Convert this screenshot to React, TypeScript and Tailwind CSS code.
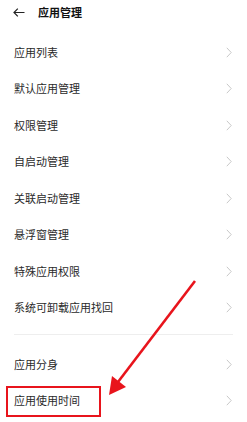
const groupOne = [
  '应用列表',
  '默认应用管理',
  '权限管理',
  '自启动管理',
  '关联启动管理',
  '悬浮窗管理',
  '特殊应用权限',
  '系统可卸载应用找回',
]

const groupTwo = ['应用分身', '应用使用时间']

function Chevron() {
  return (
    <svg width="6" height="11" viewBox="0 0 6 11" fill="none" className="shrink-0">
      <path d="M0.8 0.8 L5.2 5.5 L0.8 10.2" stroke="#c8c8c8" strokeWidth="1" />
    </svg>
  )
}

function Row({ label }: { label: string }) {
  return (
    <div className="flex h-[36.5px] items-center justify-between pl-[14px] pr-[15px]">
      <span className="text-[11px] leading-none text-[#2a2a2a]">{label}</span>
      <Chevron />
    </div>
  )
}

export default function App() {
  return (
    <div className="relative h-[422px] w-[247px] overflow-hidden bg-white font-['Noto_Sans_CJK_SC','Noto_Sans',sans-serif]">
      <div className="flex h-[24px] items-center pl-[13px]">
        <svg width="12" height="9" viewBox="0 0 12 9" fill="none">
          <path d="M11.5 4.5 H1 M4.8 0.7 L1 4.5 L4.8 8.3" stroke="#222" strokeWidth="1.2" />
        </svg>
        <span className="ml-[13px] text-[11px] font-bold leading-none text-[#111]">应用管理</span>
      </div>

      <div className="mt-[10px] flex flex-col">
        {groupOne.map((l) => (
          <Row key={l} label={l} />
        ))}
      </div>

      <div className="mx-[14px] mt-[8px] h-px bg-[#eeeeee]" />

      <div className="mt-[11px] flex flex-col">
        {groupTwo.map((l) => (
          <Row key={l} label={l} />
        ))}
      </div>

      {/* annotation overlay */}
      <div className="absolute left-[6px] top-[386px] h-[31px] w-[95px] border-2 border-[#e8141c]" />
      <svg className="absolute left-0 top-0" width="247" height="422" viewBox="0 0 247 422">
        <line x1="195" y1="281" x2="118" y2="382" stroke="#e8141c" strokeWidth="2.6" />
        <polygon points="109,395 112,376 126,387" fill="#e8141c" />
      </svg>
    </div>
  )
}
